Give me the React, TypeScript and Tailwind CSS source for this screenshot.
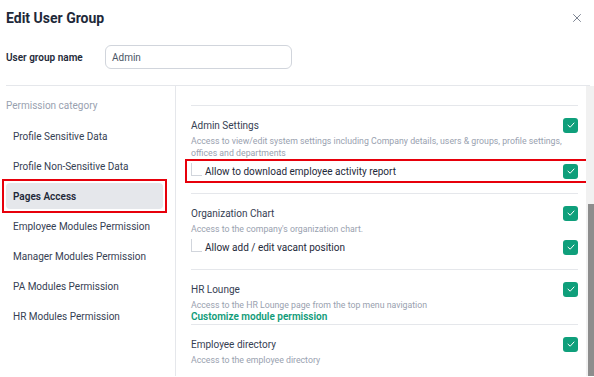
import { X } from 'lucide-react';

const categories = [
	'Profile Sensitive Data',
	'Profile Non-Sensitive Data',
	'Pages Access',
	'Employee Modules Permission',
	'Manager Modules Permission',
	'PA Modules Permission',
	'HR Modules Permission',
];

const Check = () => (
	<span className="flex h-[15px] w-[15px] shrink-0 items-center justify-center rounded-[3px] bg-[#0f9f7b]">
		<svg width="10" height="10" viewBox="0 0 10 10" fill="none">
			<path d="M2 5.2 4.2 7.2 8 3" stroke="white" strokeWidth="1" strokeLinecap="round" strokeLinejoin="round" />
		</svg>
	</span>
);

const SubRow = ({ label, marked }: { label: string; marked?: boolean }) => (
	<div
		className={`-ml-[6px] -mr-[10px] flex h-6 items-center border-2 pl-[4px] pr-[8px] ${marked ? 'border-red-600' : 'border-transparent'}`}
	>
		<span className="mb-[4px] mr-[3px] h-[13px] w-[11px] border-b border-l border-gray-300" />
		<span className="flex-1 text-[10px] text-gray-800">{label}</span>
		<Check />
	</div>
);

const Item = ({ title, desc, children, last }: { title: string; desc: string; children?: React.ReactNode; last?: boolean }) => (
	<div className={`border-t border-gray-200 pt-[11px] ${last ? 'pb-0' : 'pb-[10px]'}`}>
		<div className="flex h-4 items-center">
			<span className="flex-1 text-[10px] text-gray-700">{title}</span>
			<Check />
		</div>
		<p className="mt-[2px] pr-[10px] text-[8.75px] leading-[12px] text-gray-400">{desc}</p>
		{children}
	</div>
);

export default function App() {
	return (
		<div className="h-[377px] w-[594px] overflow-hidden bg-white font-['Roboto',sans-serif]">
			<div className="flex h-9 items-center justify-between pl-[6px] pr-[10px]">
				<h1 className="text-[14px] font-bold text-gray-800">Edit User Group</h1>
				<X size={14} strokeWidth={1.5} className="text-gray-500" />
			</div>
			<div className="flex items-center px-[6px] pt-[9px]">
				<label className="w-[99px] text-[10px] font-semibold text-gray-800">User group name</label>
				<div className="flex h-6 w-[187px] items-center rounded-md border border-gray-300 px-[6px] text-[10px] text-gray-600">Admin</div>
			</div>
			<div className="mx-[6px] mt-[16px] mr-[4px] border-t border-gray-200" />
			<div className="flex h-[290px]">
				<div className="w-[176px] shrink-0 border-r border-gray-200 pl-[6px] pr-[12px] pt-[12px]">
					<div className="text-[10px] leading-4 text-gray-400">Permission category</div>
					<div className="mt-[9px] flex flex-col gap-1">
						{categories.map((c) =>
							c === 'Pages Access' ? (
								<div key={c} className="-m-[4px] border-2 border-red-600 p-[2px]">
									<div className="flex h-[26px] items-center rounded-sm bg-gray-200 px-[7px] text-[10px] font-semibold text-gray-800">{c}</div>
								</div>
							) : (
								<div key={c} className="flex h-[26px] items-center px-[7px] text-[10px] text-gray-700">
									{c}
								</div>
							),
						)}
					</div>
				</div>
				<div className="flex flex-1 overflow-hidden">
					<div className="flex-1 pl-[15px] pr-[8px] pt-[19px]">
						<Item
							title="Admin Settings"
							desc="Access to view/edit system settings including Company details, users & groups, profile settings, offices and departments"
						>
							<SubRow label="Allow to download employee activity report" marked />
						</Item>
						<Item title="Organization Chart" desc="Access to the company's organization chart.">
							<SubRow label="Allow add / edit vacant position" />
						</Item>
						<Item title="HR Lounge" desc="Access to the HR Lounge page from the top menu navigation" last>
							<div className="pb-[1px] text-[10px] font-semibold leading-[12px] text-[#0f9b78]">Customize module permission</div>
						</Item>
						<Item title="Employee directory" desc="Access to the employee directory" />
					</div>
					<div className="flex w-[8px] shrink-0 flex-col bg-[#f1f1f1] pl-[2px]">
						<div className="mt-[118px] flex-1 bg-[#8d8d8d]" />
					</div>
				</div>
			</div>
		</div>
	);
}
